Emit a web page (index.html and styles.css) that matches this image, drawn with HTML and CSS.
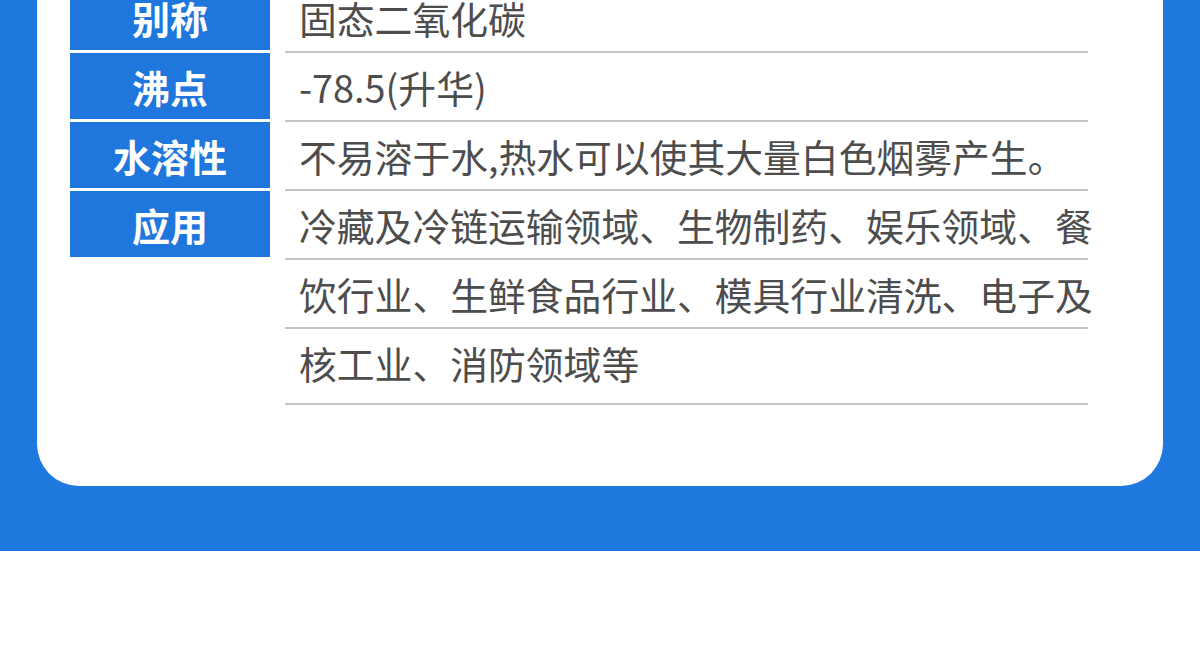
FILE: index.html
```html
<!DOCTYPE html>
<html lang="zh-CN">

<head>
    <meta charset="UTF-8">
    <meta name="viewport" content="width=device-width, initial-scale=1.0">
    <title>干冰 | 产品参数</title>
    <link rel="stylesheet" href="styles.css">
</head>

<body>
    <div class="panel">
        <div class="card">
            <div class="table">
                <div class="row">
                    <div class="label">别称</div>
                    <div class="value">固态二氧化碳</div>
                </div>
                <div class="row">
                    <div class="label">沸点</div>
                    <div class="value">-78.5(升华)</div>
                </div>
                <div class="row">
                    <div class="label">水溶性</div>
                    <div class="value">不易溶于水,热水可以使其大量白色烟雾产生。</div>
                </div>
                <div class="row">
                    <div class="label">应用</div>
                    <div class="value multi">
                        <span>冷藏及冷链运输领域、生物制药、娱乐领域、餐</span>
                        <span>饮行业、生鲜食品行业、模具行业清洗、电子及</span>
                        <span>核工业、消防领域等</span>
                    </div>
                </div>
            </div>
        </div>
    </div>
</body>

</html>
```

FILE: styles.css
```css
* {
    box-sizing: border-box;
}

body {
    font-family: "Noto Sans CJK SC", "Noto Sans", sans-serif;
    background-color: #ffffff;
    color: #4d4d4d;
    margin: 0;
    overflow: hidden;
}

.panel {
    background-color: #1f78dd;
    padding: 0 37px 65px;
}

.card {
    background-color: #fff;
    border-radius: 0 0 42px 42px;
    padding: 0 75px 81px 33px;
}

.table {
    margin-top: -16px;
}

.row {
    display: grid;
    grid-template-columns: 200px minmax(0, 1fr);
    column-gap: 15px;
    align-items: start;
}

.label {
    height: 66px;
    margin-bottom: 3px;
    background-color: #1f76dc;
    color: #fff;
    font-size: 38px;
    font-weight: bold;
    display: flex;
    align-items: center;
    justify-content: center;
}

.value {
    font-size: 37.8px;
    line-height: 67px;
    padding-left: 14px;
    border-bottom: 2px solid #c4c4c4;
    white-space: nowrap;
}

.value.multi {
    padding-left: 0;
    padding-bottom: 7px;
}

.value.multi span {
    display: block;
    padding-left: 14px;
}

.value.multi span:not(:last-child) {
    border-bottom: 2px solid #c4c4c4;
}
```
